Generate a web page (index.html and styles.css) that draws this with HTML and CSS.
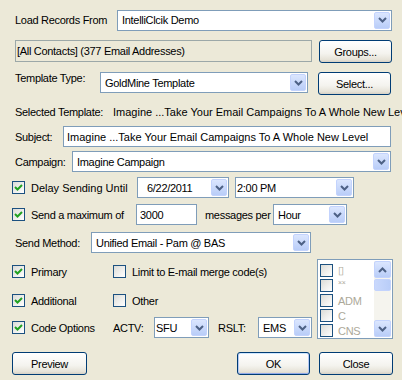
FILE: index.html
```html
<!DOCTYPE html>
<html lang="en">

<head>
  <meta charset="UTF-8">
  <meta name="viewport" content="width=device-width, initial-scale=1.0">
  <title>Send Email</title>

  <link rel="stylesheet" href="styles.css">
</head>

<body>
  <div class="dlg">
    <!-- source -->
    <div class="row r1">
      <span class="lbl w-load">Load Records From</span>
      <div class="combo w-src">
        <span class="val">IntelliClcik Demo</span>
        <span class="drop"><svg width="9" height="6" viewBox="0 0 9 6"><path d="M1 1l3.5 3.5L8 1"/></svg></span>
      </div>
    </div>

    <div class="row r2">
      <div class="info">[All Contacts] (377 Email Addresses)</div>
      <button class="btn b-groups">Groups...</button>
    </div>

    <div class="row r3">
      <span class="lbl w-type">Template Type:</span>
      <div class="combo w-type-c">
        <span class="val">GoldMine Template</span>
        <span class="drop"><svg width="9" height="6" viewBox="0 0 9 6"><path d="M1 1l3.5 3.5L8 1"/></svg></span>
      </div>
      <button class="btn b-select">Select...</button>
    </div>

    <div class="row r4">
      <span class="lbl w-sel">Selected Template:</span>
      <span class="sel-name">Imagine ...Take Your Email Campaigns To A Whole New Level</span>
    </div>

    <div class="row r5">
      <span class="lbl w-subj">Subject:</span>
      <div class="edit w-subj-e">Imagine ...Take Your Email Campaigns To A Whole New Level</div>
    </div>

    <div class="row r6">
      <span class="lbl w-camp">Campaign:</span>
      <div class="combo w-camp-c">
        <span class="val">Imagine Campaign</span>
        <span class="drop"><svg width="9" height="6" viewBox="0 0 9 6"><path d="M1 1l3.5 3.5L8 1"/></svg></span>
      </div>
    </div>

    <!-- schedule -->
    <div class="row r7">
      <label class="cb w-delay">
        <span class="chk"><svg width="11" height="11" viewBox="0 0 11 11"><path d="M2 5l2.5 2.5L9 3"/></svg></span>
        <span class="wide">Delay Sending Until</span>
      </label>
      <div class="combo w-date">
        <span class="val date">6/22/2011</span>
        <span class="drop"><svg width="9" height="6" viewBox="0 0 9 6"><path d="M1 1l3.5 3.5L8 1"/></svg></span>
      </div>
      <div class="combo w-time">
        <span class="val tight">2:00 PM</span>
        <span class="drop"><svg width="9" height="6" viewBox="0 0 9 6"><path d="M1 1l3.5 3.5L8 1"/></svg></span>
      </div>
    </div>

    <div class="row r8">
      <label class="cb w-max">
        <span class="chk"><svg width="11" height="11" viewBox="0 0 11 11"><path d="M2 5l2.5 2.5L9 3"/></svg></span>
        <span>Send a maximum of</span>
      </label>
      <div class="edit w-count">3000</div>
      <span class="per">messages per</span>
      <div class="combo w-hour">
        <span class="val">Hour</span>
        <span class="drop"><svg width="9" height="6" viewBox="0 0 9 6"><path d="M1 1l3.5 3.5L8 1"/></svg></span>
      </div>
    </div>

    <div class="row r9">
      <span class="lbl w-meth">Send Method:</span>
      <div class="combo w-meth-c">
        <span class="val">Unified Email - Pam @ BAS</span>
        <span class="drop"><svg width="9" height="6" viewBox="0 0 9 6"><path d="M1 1l3.5 3.5L8 1"/></svg></span>
      </div>
    </div>

    <!-- options -->
    <div class="opts">
      <div class="opt-col">
        <div class="row r10">
          <label class="cb w-opt">
            <span class="chk"><svg width="11" height="11" viewBox="0 0 11 11"><path d="M2 5l2.5 2.5L9 3"/></svg></span>
            <span>Primary</span>
          </label>
          <label class="cb">
            <span class="chk off"></span>
            <span>Limit to E-mail merge code(s)</span>
          </label>
        </div>
        <div class="row r11">
          <label class="cb w-opt">
            <span class="chk"><svg width="11" height="11" viewBox="0 0 11 11"><path d="M2 5l2.5 2.5L9 3"/></svg></span>
            <span>Additional</span>
          </label>
          <label class="cb">
            <span class="chk off"></span>
            <span>Other</span>
          </label>
        </div>
        <div class="row r12">
          <label class="cb w-opt">
            <span class="chk"><svg width="11" height="11" viewBox="0 0 11 11"><path d="M2 5l2.5 2.5L9 3"/></svg></span>
            <span>Code Options</span>
          </label>
          <span class="w-actv">ACTV:</span>
          <div class="combo w-actv-c">
            <span class="val tight">SFU</span>
            <span class="drop"><svg width="9" height="6" viewBox="0 0 9 6"><path d="M1 1l3.5 3.5L8 1"/></svg></span>
          </div>
          <span class="w-rslt">RSLT:</span>
          <div class="combo w-rslt-c">
            <span class="val">EMS</span>
            <span class="drop"><svg width="9" height="6" viewBox="0 0 9 6"><path d="M1 1l3.5 3.5L8 1"/></svg></span>
          </div>
        </div>
      </div>

      <div class="list">
        <ul class="items">
          <li><span class="chk off"></span><span class="it">&#9647;</span></li>
          <li><span class="chk off"></span><span class="it small">&times;&times;</span></li>
          <li><span class="chk off"></span><span class="it">ADM</span></li>
          <li><span class="chk off"></span><span class="it">C</span></li>
          <li><span class="chk off"></span><span class="it">CNS</span></li>
        </ul>
        <div class="sbar">
          <span class="sbtn"><svg width="9" height="6" viewBox="0 0 9 6"><path d="M1 5l3.5-3.5L8 5"/></svg></span>
          <span class="thumb"></span>
          <span class="track"></span>
          <span class="sbtn"><svg width="9" height="6" viewBox="0 0 9 6"><path d="M1 1l3.5 3.5L8 1"/></svg></span>
        </div>
      </div>
    </div>

    <div class="row r13">
      <button class="btn b-prev">Preview</button>
      <button class="btn b-ok">OK</button>
      <button class="btn b-close">Close</button>
    </div>
  </div>
</body>

</html>
```

FILE: styles.css
```css
* {
  padding: 0;
  margin: 0;
  box-sizing: border-box;
  list-style: none;
}

body {
  background-color: #ece9d8;
  font-family: "Liberation Sans", Arial, sans-serif;
  font-size: 11px;
  letter-spacing: -0.3px;
  color: #000;
}

.dlg {
  width: 402px;
  height: 380px;
  padding: 9px 0 0 12px;
  overflow: hidden;
}

.row {
  display: flex;
  align-items: center;
  height: 21px;
  white-space: nowrap;
}

.lbl {
  padding-left: 3px;
  flex-shrink: 0;
}

/* rows */
.r1 { height: 22px; }
.r2 { margin-top: 9px; height: 23px; align-items: flex-start; }
.r3 { margin-top: 9px; height: 23px; align-items: flex-start; }
.r4 { margin-top: 10px; height: 14px; overflow: hidden; }
.r5 { margin-top: 7px; }
.r6 { margin-top: 4px; }
.r7 { margin-top: 5px; }
.r8 { margin-top: 6px; }
.r9 { margin-top: 7px; }
.r10 { margin-top: 5px; height: 15px; }
.r11 { margin-top: 14px; height: 15px; }
.r12 { margin-top: 9px; }
.r13 { margin-top: 13px; height: 23px; }

/* widths */
.w-load { width: 105px; }
.w-src { width: 275px; height: 22px; }
.w-type { width: 88px; }
.w-type-c { width: 208px; height: 22px; }
.w-sel { width: 101px; }
.w-subj { width: 51px; }
.w-subj-e { width: 328px; }
.w-camp { width: 60px; }
.w-camp-c { width: 319px; }
.w-delay { width: 125px; }
.w-date { width: 92px; }
.w-time { width: 119px; margin-left: 6px; }
.w-max { width: 124px; }
.w-count { width: 61px; }
.w-hour { width: 74px; }
.w-meth { width: 79px; }
.w-meth-c { width: 220px; }
.w-opt { width: 101px; }
.w-actv { width: 41px; }
.w-actv-c { width: 55px; }
.w-rslt { width: 40px; margin-left: 9px; }
.w-rslt-c { width: 54px; }

.per {
  width: 76px;
  padding-left: 8px;
}

/* long strings run a bit wider in the original font */
.sel-name,
.w-subj-e,
.wide {
  letter-spacing: 0;
}

.sel-name {
  overflow: hidden;
}

/* combo box */
.combo {
  display: flex;
  align-items: stretch;
  height: 21px;
  background-color: #fff;
  border: 1px solid #7f9db9;
  flex-shrink: 0;
}

.combo .val {
  flex: 1;
  display: flex;
  align-items: center;
  padding-left: 4px;
  overflow: hidden;
}

.combo .val.tight {
  padding-left: 1px;
}

.combo .val.date {
  padding-left: 9px;
}

.drop,
.sbtn {
  width: 16px;
  margin: 1px;
  display: flex;
  align-items: center;
  justify-content: center;
  border: 1px solid #c3d3fd;
  border-radius: 2px;
  background: linear-gradient(#dbe6fe, #b9cdf8);
}

.drop path,
.sbtn path {
  fill: none;
  stroke: #4d6185;
  stroke-width: 2;
}

/* edit boxes */
.edit {
  height: 21px;
  display: flex;
  align-items: center;
  padding-left: 3px;
  background-color: #fff;
  border: 1px solid #7f9db9;
  overflow: hidden;
  flex-shrink: 0;
}

.info {
  width: 297px;
  height: 22px;
  margin-left: 3px;
  padding-left: 1px;
  display: flex;
  align-items: center;
  border: 1px solid #9ca8a8;
}

/* buttons */
.btn {
  height: 23px;
  font-family: inherit;
  font-size: 11px;
  letter-spacing: -0.3px;
  color: #000;
  border: 1px solid #003c74;
  border-radius: 3px;
  background: linear-gradient(#ffffff, #f4f3ee 60%, #e6e3d8 88%, #d6d0c5);
}

.b-groups { width: 73px; margin-left: 7px; }
.b-select { width: 73px; margin-left: 10px; }
.b-prev { width: 75px; }
.b-ok {
  width: 73px;
  margin-left: 150px;
  box-shadow: inset 1px 0 #b4c8f4, inset -1px 0 #b4c8f4, inset 0 1px #cee7ff, inset 0 -1px #8fa9e8;
}
.b-close { width: 74px; margin-left: 9px; }

/* checkboxes */
.cb {
  display: flex;
  align-items: center;
  flex-shrink: 0;
}

.chk {
  width: 13px;
  height: 13px;
  margin-right: 6px;
  display: flex;
  align-items: center;
  justify-content: center;
  border: 1px solid #1c5180;
  background: linear-gradient(135deg, #dcdcd7, #ffffff);
  flex-shrink: 0;
}

.chk path {
  fill: none;
  stroke: #21a121;
  stroke-width: 2;
}

/* options + code list */
.opts {
  display: flex;
  align-items: flex-start;
  margin-top: 6px;
}

.opt-col {
  width: 305px;
}

.list {
  width: 76px;
  height: 80px;
  display: flex;
  padding: 1px;
  background-color: #fff;
  border: 1px solid #7f9db9;
}

.items {
  flex: 1;
  padding-top: 2px;
}

.items li {
  display: flex;
  align-items: center;
  height: 15px;
  padding-left: 1px;
}

.items .chk {
  margin-right: 5px;
}

.it {
  color: #aca899;
}

.it.small {
  font-size: 7px;
  align-self: flex-start;
  padding-top: 1px;
}

.sbar {
  width: 17px;
  display: flex;
  flex-direction: column;
  background-color: #f5f4ee;
}

.sbtn {
  width: 17px;
  height: 17px;
  margin: 0;
  flex-shrink: 0;
}

.thumb {
  height: 12px;
  margin-top: 1px;
  border: 1px solid #c3d3fd;
  border-radius: 2px;
  background: linear-gradient(90deg, #c9d8fc, #b9cdf8);
}

.track {
  flex: 1;
}
```
